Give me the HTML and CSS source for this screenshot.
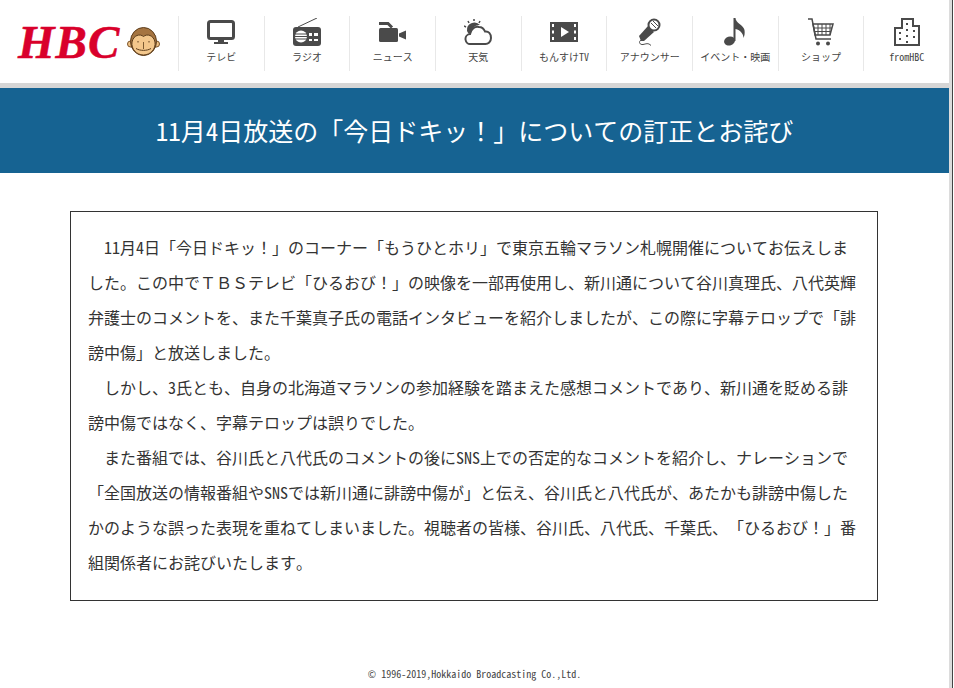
FILE: index.html
```html
<!DOCTYPE html>
<html lang="ja">
<head>
    <meta charset="UTF-8">
    <meta name="viewport" content="width=device-width, initial-scale=1.0">
    <title>11月4日放送の「今日ドキッ！」についての訂正とお詫び</title>
    <link rel="stylesheet" href="styles.css">
</head>
<body>
    <div class="page">
        <header class="site-header">
            <a class="logo" href="#">
                <span class="logo-text">HBC</span>
                <svg class="logo-monkey" width="33" height="29" viewBox="0 0 33 29">
                    <circle cx="3.500" cy="17" r="3" fill="#efc286" stroke="#7a5228"/>
                    <circle cx="29.500" cy="17" r="3" fill="#efc286" stroke="#7a5228"/>
                    <ellipse cx="16.500" cy="14.500" rx="13" ry="14" fill="#a57440" stroke="#5c3d1c"/>
                    <path d="M16.500 9.500C13 6.500 6.500 8 5 15c-1 7 4.500 13 11.500 13S29 22 28 15c-1.500-7-8-8.500-11.500-5.500z" fill="#f3c78c" stroke="#5c3d1c"/>
                    <path d="M16.500 15v7" stroke="#5c3d1c" fill="none" stroke-width=".8"/>
                    <path d="M9 21.500c4 2.500 11 2.500 15 0" stroke="#5c3d1c" fill="none"/>
                    <path d="M11 14v1.500M22 14v1.500" stroke="#5c3d1c"/>
                </svg>
            </a>
            <nav class="main-nav">
                <a class="nav-item" href="#">
                    <svg width="28" height="24" viewBox="0 0 28 24">
                        <rect x="1.500" y="1.500" width="25" height="17" rx="2" fill="none" stroke="#4a4a4a" stroke-width="3"/>
                        <path d="M11 19h6v3h4v2H7v-2h4z" fill="#4a4a4a"/>
                    </svg>
                    <span>テレビ</span>
                </a>
                <a class="nav-item" href="#">
                    <svg width="28" height="28" viewBox="0 0 28 28">
                        <path d="M5 9 24 0" stroke="#4a4a4a" fill="none"/>
                        <rect y="9" width="28" height="19" rx="3" fill="#4a4a4a"/>
                        <circle cx="8" cy="18.500" r="6" fill="#fff"/>
                        <path d="M2 16h12M2 18.500h12M2 21h12" stroke="#4a4a4a"/>
                        <path d="M16 15h3v3h-3zM21 15h4v3h-4zM16 21h3v2h-3zM21 21h4v2h-4z" fill="#fff"/>
                    </svg>
                    <span>ラジオ</span>
                </a>
                <a class="nav-item" href="#">
                    <svg width="29" height="20" viewBox="0 0 29 20">
                        <path d="M1 1.500h9l4 4" stroke="#4a4a4a" stroke-width="3" fill="none"/>
                        <rect x="1" y="6" width="19" height="14" rx="1.500" fill="#4a4a4a"/>
                        <path d="M21 11.500l7-3v9l-7-3z" fill="#4a4a4a"/>
                    </svg>
                    <span>ニュース</span>
                </a>
                <a class="nav-item" href="#">
                    <svg width="28" height="26" viewBox="0 0 28 26">
                        <path d="M3 12a7.500 7.500 0 0 1 13-6c-4 0-7 2-8 6l-3 3a7.500 7.500 0 0 1-2-3z" fill="#4a4a4a"/>
                        <path d="M0 7l2 1M4 2l1 2M10 0v2M16 2l-1 2" stroke="#4a4a4a" stroke-width="1.500"/>
                        <path d="M7 25a5 5 0 0 1-1-10c1-5 5-8 9-7 3 0 5 2 6 4.500 3.500-.5 6 2 6 6.500 0 4-3 6-5.500 6z" fill="#fff" stroke="#4a4a4a" stroke-width="2"/>
                    </svg>
                    <span>天気</span>
                </a>
                <a class="nav-item" href="#">
                    <svg width="28" height="20" viewBox="0 0 28 20">
                        <rect width="28" height="20" fill="#4a4a4a"/>
                        <path d="M2 2h2v3H2zM2 8.500h2v3H2zM2 15h2v3H2zM24 2h2v3h-2zM24 8.500h2v3h-2zM24 15h2v3h-2z" fill="#fff"/>
                        <path d="M11 5l8 5-8 5z" fill="#fff"/>
                    </svg>
                    <span>もんすけTV</span>
                </a>
                <a class="nav-item" href="#">
                    <svg width="24" height="28" viewBox="0 0 24 28">
                        <path d="M1 18l9-10 6 6-10 9-3 0z" fill="#4a4a4a"/>
                        <circle cx="16" cy="7" r="5.500" fill="#fff" stroke="#4a4a4a" stroke-width="2"/>
                        <path d="M13 5l5 5M15 3l5 5" stroke="#4a4a4a"/>
                        <path d="M3 22c-3 2-1 5 2 4.500s5-2 8 1" stroke="#4a4a4a" fill="none"/>
                    </svg>
                    <span>アナウンサー</span>
                </a>
                <a class="nav-item" href="#">
                    <svg width="24" height="28" viewBox="0 0 24 28">
                        <ellipse cx="6.500" cy="23" rx="5.500" ry="4.500" fill="#4a4a4a" transform="rotate(-18 6.500 23)"/>
                        <path d="M10.500 23V0h2c0 5 8 7 9 12 .5 3 0 6-1 8 0-4-3-8-8-9v12z" fill="#4a4a4a"/>
                    </svg>
                    <span>イベント・映画</span>
                </a>
                <a class="nav-item" href="#">
                    <svg width="28" height="28" viewBox="0 0 28 28">
                        <path d="M1 1h4l4 20h15" stroke="#4a4a4a" stroke-width="1.500" fill="none"/>
                        <path d="M6 6h20l-3 11H8z" fill="none" stroke="#4a4a4a" stroke-width="1.500"/>
                        <path d="M7 10h18M8 13.500h16M11 6v11M15 6v11M19 6v11M23 6v11" stroke="#4a4a4a"/>
                        <circle cx="11" cy="25.500" r="2" fill="#4a4a4a"/>
                        <circle cx="21" cy="25.500" r="2" fill="#4a4a4a"/>
                    </svg>
                    <span>ショップ</span>
                </a>
                <a class="nav-item" href="#">
                    <svg width="26" height="28" viewBox="0 0 26 28">
                        <path d="M1 27V10h7V1h11v7h6v19z" fill="#fff" stroke="#4a4a4a" stroke-width="2"/>
                        <path d="M5 14h2v2H5zM5 20h2v2H5zM12 5h2v2h-2zM12 11h2v2h-2zM12 17h2v2h-2zM12 23h2v2h-2zM19 12h2v2h-2zM19 18h2v2h-2z" fill="#4a4a4a"/>
                    </svg>
                    <span>fromHBC</span>
                </a>
            </nav>
        </header>

        <div class="title-band">
            <h1>11月4日放送の「今日ドキッ！」についての訂正とお詫び</h1>
        </div>

        <main class="notice">
            <p>11月4日「今日ドキッ！」のコーナー「もうひとホリ」で東京五輪マラソン札幌開催についてお伝えしました。この中でＴＢＳテレビ「ひるおび！」の映像を一部再使用し、新川通について谷川真理氏、八代英輝弁護士のコメントを、また千葉真子氏の電話インタビューを紹介しましたが、この際に字幕テロップで「誹謗中傷」と放送しました。</p>
            <p>しかし、3氏とも、自身の北海道マラソンの参加経験を踏まえた感想コメントであり、新川通を貶める誹謗中傷ではなく、字幕テロップは誤りでした。</p>
            <p>また番組では、谷川氏と八代氏のコメントの後にSNS上での否定的なコメントを紹介し、ナレーションで「全国放送の情報番組やSNSでは新川通に誹謗中傷が」と伝え、谷川氏と八代氏が、あたかも誹謗中傷したかのような誤った表現を重ねてしまいました。視聴者の皆様、谷川氏、八代氏、千葉氏、「ひるおび！」番組関係者にお詫びいたします。</p>
        </main>

        <footer class="site-footer">© 1996-2019,Hokkaido Broadcasting Co.,Ltd.</footer>
    </div>
    <div class="window-edge"></div>
</body>
</html>
```

FILE: styles.css
```css
html, body {
    margin: 0;
    padding: 0;
    background-color: #fff;
}
body {
    display: flex;
    height: 688px;
    font-family: "Noto Sans Mono CJK JP", "Noto Sans CJK JP", "DejaVu Sans Mono", monospace;
    color: #333;
    overflow: hidden;
    text-spacing-trim: space-all;
}
.page {
    flex: none;
    width: 949px;
}
.window-edge {
    flex: none;
    width: 3px;
    background-color: #dcdcdc;
    border-right: 1px solid #444;
}
a {
    text-decoration: none;
    color: inherit;
}
.site-header {
    display: flex;
    height: 83px;
    border-bottom: 5px solid #d6d6d6;
}
.logo {
    display: flex;
    align-items: center;
    gap: 7px;
    width: 178px;
    box-sizing: border-box;
    padding-left: 18px;
}
.logo-text {
    font-family: "Liberation Serif", serif;
    font-style: italic;
    font-weight: bold;
    font-size: 47px;
    letter-spacing: 1px;
    color: #d9002b;
    -webkit-text-stroke: 0.5px #d9002b;
}
.main-nav {
    display: flex;
    flex: 1;
    padding: 16px 0 12px;
}
.nav-item {
    flex: 1;
    display: grid;
    grid-template-rows: 30px 13px;
    row-gap: 3px;
    place-items: center;
    align-content: start;
    padding-top: 1px;
    border-left: 1px solid #e8e8e8;
    font-size: 10px;
    line-height: 13px;
    color: #444;
}
.title-band {
    height: 85px;
    display: flex;
    align-items: center;
    justify-content: center;
    background-color: #166392;
}
.title-band h1 {
    margin: 0 0 2px;
    font-size: 25px;
    font-weight: normal;
    color: #fff;
}
.notice {
    box-sizing: border-box;
    width: 808px;
    margin: 38px 0 0 70px;
    padding: 18px 15px 20px 17px;
    border: 1px solid #333;
    font-size: 16px;
    line-height: 35px;
}
.notice p {
    margin: 0;
    text-indent: 1em;
}
.site-footer {
    margin-top: 66px;
    text-align: center;
    font-size: 10px;
    line-height: 13px;
    color: #444;
}
```
